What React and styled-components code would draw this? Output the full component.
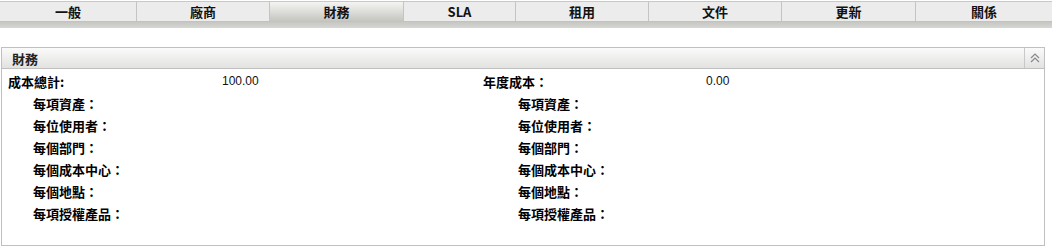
import React from 'react'
import styled, { createGlobalStyle } from 'styled-components'

const GlobalStyle = createGlobalStyle`
  body {
    margin: 0;
    background: #fff;
    font-family: "Noto Sans CJK TC", "Liberation Sans", sans-serif;
  }
`

const tabs = [
  { label: '一般', width: 137 },
  { label: '廠商', width: 133 },
  { label: '財務', width: 134, active: true },
  { label: 'SLA', width: 112 },
  { label: '租用', width: 133 },
  { label: '文件', width: 133 },
  { label: '更新', width: 134 },
  { label: '關係', width: 136 },
]

const rows = [
  { label: '成本總計:', value: '100.00', right: '年度成本：', rightValue: '0.00', top: true },
  { label: '每項資產：', right: '每項資產：' },
  { label: '每位使用者：', right: '每位使用者：' },
  { label: '每個部門：', right: '每個部門：' },
  { label: '每個成本中心：', right: '每個成本中心：' },
  { label: '每個地點：', right: '每個地點：' },
  { label: '每項授權產品：', right: '每項授權產品：' },
]

function App() {
  return (
    <Page>
      <GlobalStyle />
      <TabBar>
        <TabRow>
          {tabs.map((t) => (
            <Tab key={t.label} $w={t.width} $active={t.active}>
              {t.label}
            </Tab>
          ))}
        </TabRow>
        <TabStrip />
      </TabBar>

      <Panel>
        <PanelHeader>
          <PanelTitle>財務</PanelTitle>
          <CollapseButton>
            <svg width="10" height="10" viewBox="0 0 10 10">
              <path d="M1 5 L5 1 L9 5" fill="none" stroke="#8a8a8a" strokeWidth="1.2" />
              <path d="M1 9 L5 5 L9 9" fill="none" stroke="#8a8a8a" strokeWidth="1.2" />
            </svg>
          </CollapseButton>
        </PanelHeader>
        <PanelBody>
          {rows.map((r, i) => (
            <React.Fragment key={i}>
              <Label $indent={r.top ? 0 : 25}>{r.label}</Label>
              <Value>{r.value}</Value>
              <Label $indent={r.top ? 0 : 35}>{r.right}</Label>
              <Value>{r.rightValue}</Value>
            </React.Fragment>
          ))}
        </PanelBody>
      </Panel>
    </Page>
  )
}

export default App

const Page = styled.div`
  width: 1052px;
  height: 246px;
  overflow: hidden;
`

const TabBar = styled.div`
  padding-top: 1px;
`

const TabRow = styled.div`
  display: flex;
  border-top: 1px solid #c8c8c8;
`

const Tab = styled.div`
  width: ${(p) => p.$w}px;
  box-sizing: border-box;
  height: 19px;
  display: flex;
  align-items: center;
  justify-content: center;
  font-size: 13px;
  font-weight: bold;
  color: #111;
  border-right: 1px solid #c4c4c4;
  background: ${(p) =>
    p.$active ? 'linear-gradient(#f4f4f2, #c6c6c0)' : '#ececec'};
  &:last-child {
    border-right: none;
  }
`

const TabStrip = styled.div`
  height: 6px;
  background: linear-gradient(#c6c6c2, #d6d6d2);
  border-top: 1px solid #c2c2be;
`

const Panel = styled.div`
  margin: 19px 0 0 1px;
  width: 1044px;
  height: 199px;
  box-sizing: border-box;
  border: 1px solid #c0c0c0;
`

const PanelHeader = styled.div`
  display: flex;
  height: 20px;
  border-bottom: 1px solid #c0c0c0;
  background: linear-gradient(#fafafa, #e2e2e0);
`

const PanelTitle = styled.div`
  flex: 1;
  padding-left: 10px;
  display: flex;
  align-items: center;
  font-size: 13px;
  font-weight: bold;
  color: #222;
`

const CollapseButton = styled.div`
  width: 19px;
  border-left: 1px solid #c8c8c8;
  display: flex;
  align-items: center;
  justify-content: center;
`

const PanelBody = styled.div`
  display: grid;
  grid-template-columns: 214px 261px 223px 1fr;
  grid-auto-rows: 22px;
  padding: 1px 0 0 6px;
`

const Label = styled.div`
  display: flex;
  align-items: center;
  padding-left: ${(p) => p.$indent}px;
  font-size: 13px;
  font-weight: bold;
  color: #000;
  white-space: nowrap;
`

const Value = styled.div`
  display: flex;
  align-items: center;
  font-family: "Liberation Sans", Arial, sans-serif;
  font-size: 12px;
  color: #111;
`
